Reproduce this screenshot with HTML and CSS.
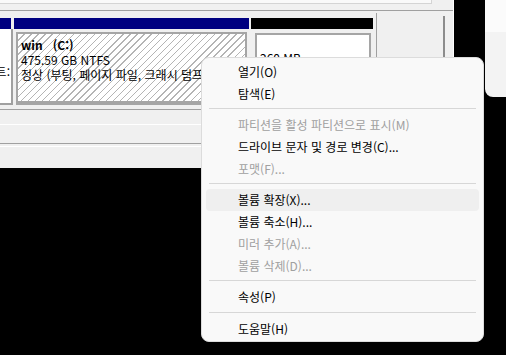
FILE: index.html
```html
<!DOCTYPE html>
<html lang="ko">
<head>
  <meta charset="UTF-8">
  <meta name="viewport" content="width=device-width, initial-scale=1.0">
  <title>디스크 관리</title>
  <link rel="stylesheet" href="styles.css">
</head>
<body>
  <div class="mmc">
    <div class="volume-list">
      <div class="list-body"></div>
    </div>
    <div class="disk-area">
      <div class="disk-frame">
        <div class="disk-row">
          <div class="col disk-label">
            <div class="bar"></div>
            <div class="cell"><span>트:</span></div>
          </div>
          <div class="col part-c">
            <div class="bar"></div>
            <div class="cell">
              <div class="hatch">
                <div class="vol-name">win&nbsp;&nbsp;&nbsp;(C:)</div>
                <div>475.59 GB NTFS</div>
                <div>정상 (부팅, 페이지 파일, 크래시 덤프, 기본 데이터 파티션)</div>
              </div>
            </div>
          </div>
          <div class="col part-efi">
            <div class="bar efi"></div>
            <div class="cell">
              <div class="efi-box">
                <div>&nbsp;</div>
                <div>260 MB</div>
              </div>
            </div>
          </div>
        </div>
      </div>
      <div class="vscroll"></div>
    </div>
    <div class="status">
      <div class="status-row1"></div>
      <div class="status-row2"></div>
      <div class="status-row3"></div>
    </div>
  </div>

  <div class="side-window">
    <div class="side-top"></div>
  </div>

  <ul class="context-menu">
    <li class="menu-item">열기(O)</li>
    <li class="menu-item">탐색(E)</li>
    <li class="sep"></li>
    <li class="menu-item disabled">파티션을 활성 파티션으로 표시(M)</li>
    <li class="menu-item">드라이브 문자 및 경로 변경(C)...</li>
    <li class="menu-item disabled">포맷(F)...</li>
    <li class="sep"></li>
    <li class="menu-item hover">볼륨 확장(X)...</li>
    <li class="menu-item">볼륨 축소(H)...</li>
    <li class="menu-item disabled">미러 추가(A)...</li>
    <li class="menu-item disabled">볼륨 삭제(D)...</li>
    <li class="sep"></li>
    <li class="menu-item">속성(P)</li>
    <li class="sep"></li>
    <li class="menu-item">도움말(H)</li>
  </ul>
</body>
</html>
```

FILE: styles.css
```css
* {
  margin: 0;
  padding: 0;
  box-sizing: border-box;
}
html, body {
  height: 100%;
}
body {
  position: relative;
  overflow: hidden;
  background: #000;
  color: #000;
  font-family: "Noto Sans CJK KR", "Noto Sans", sans-serif;
  font-size: 12px;
}

/* disk management window */
.mmc {
  width: 454px;
  height: 168px;
  background: #f0f0f0;
  border-right: 1px solid #fff;
}
.volume-list {
  height: 11px;
  border-bottom: 1px solid #a0a0a0;
}
.list-body {
  width: 432px;
  height: 4px;
  background: #f9f9f9;
  border-right: 1px solid #d4d4d4;
  border-bottom: 1px solid #d4d4d4;
}
.disk-area {
  display: flex;
  height: 95px;
}
.disk-frame {
  width: 377px;
  margin-top: 2px;
  padding-top: 5px;
  border-right: 1px solid #a0a0a0;
}
.disk-row {
  display: flex;
  height: 87px;
}
.col {
  display: flex;
  flex-direction: column;
}
.bar {
  flex: none;
  height: 11px;
  background: #000080;
}
.bar.efi {
  background: #000;
}
.cell {
  flex: 1;
}
.disk-label {
  width: 13px;
}
.disk-label .bar {
  width: 11px;
}
.disk-label .cell {
  display: flex;
  justify-content: flex-end;
  overflow: hidden;
  padding: 35px 1px 0 0;
  background: #fff;
  border-right: 2px solid #a0a0a0;
  border-bottom: 2px solid #a0a0a0;
  line-height: 15px;
  white-space: nowrap;
}
.part-c {
  width: 235px;
  margin-left: 1px;
}
.part-c .cell {
  padding: 3px 2px 0;
}
.hatch {
  height: 73px;
  padding: 3px 0 0 3px;
  border: 2px solid #a5a5a5;
  border-bottom-width: 4px;
  background: repeating-linear-gradient(135deg, #fff 0 4px, #b4b4b4 4px 5px);
  line-height: 15px;
  white-space: nowrap;
  overflow: hidden;
}
.vol-name {
  font-weight: bold;
}
.part-efi {
  width: 122px;
  margin-left: 2px;
}
.part-efi .cell {
  padding: 4px 2px 0 4px;
}
.efi-box {
  height: 70px;
  padding: 0 0 0 3px;
  border: 2px solid #a5a5a5;
  background: #fff;
  line-height: 15px;
  white-space: nowrap;
  overflow: hidden;
}
.vscroll {
  width: 2px;
  height: 85px;
  margin: 5px 8px 0 auto;
  background: #8c8c8c;
}
.status {
  margin-top: 3px;
  border-top: 1px solid #a0a0a0;
}
.status-row1 {
  height: 15px;
  border-bottom: 1px solid #fff;
}
.status-row2 {
  height: 19px;
  border-bottom: 1px solid #a0a0a0;
}
.status-row3 {
  height: 22px;
  margin-top: 2px;
  border-top: 1px solid #fff;
}

/* window edge on the right */
.side-window {
  position: absolute;
  left: 485px;
  top: 0;
  width: 21px;
  height: 97px;
  background: #f3f3f3;
  border-bottom-left-radius: 8px;
}
.side-top {
  height: 32px;
  background: #fbfbfb;
}

/* context menu */
.context-menu {
  position: absolute;
  left: 201px;
  top: 57px;
  width: 283px;
  padding: 3px 0 1px;
  list-style: none;
  background: #f9f9f9;
  border: 1px solid #dcdcdc;
  border-radius: 8px;
}
.menu-item {
  height: 21.7px;
  line-height: 21.7px;
  margin: 0 4px;
  padding-left: 32px;
  border-radius: 4px;
  white-space: nowrap;
}
.menu-item.hover {
  background: #efefef;
}
.menu-item.disabled {
  color: #a0a0a0;
}
.sep {
  height: 1px;
  margin: 4px 7px 5px;
  background: #d7d7d7;
}
```
